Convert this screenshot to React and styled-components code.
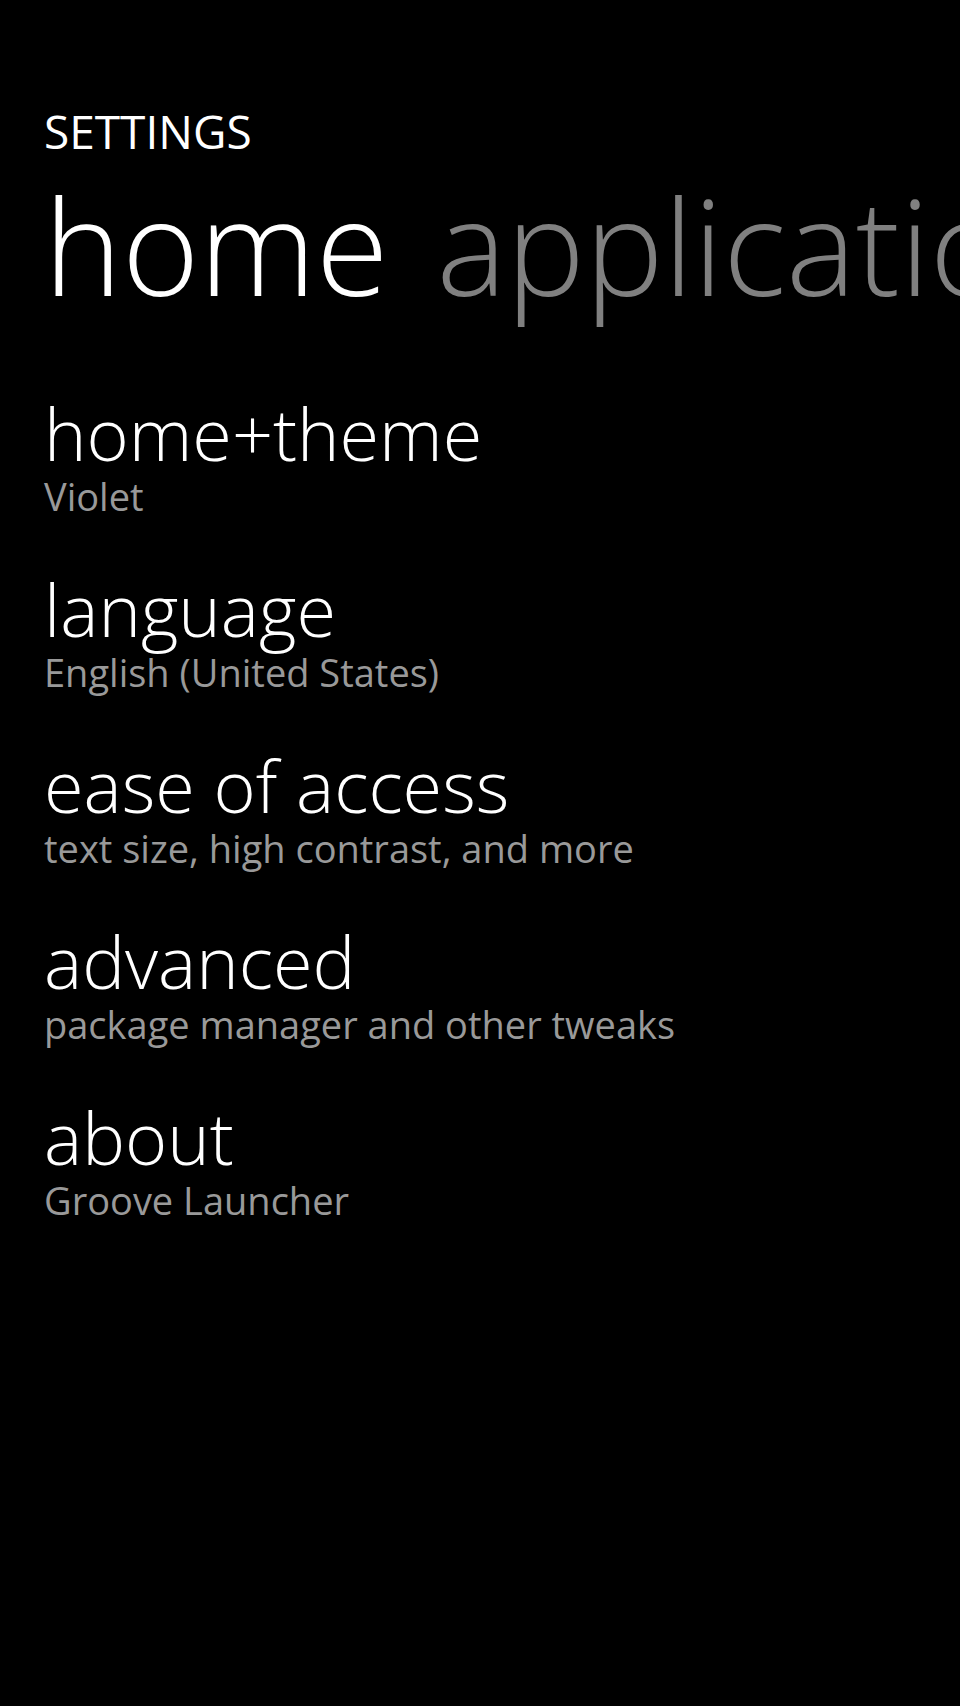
import React from "react";
import styled, { createGlobalStyle } from "styled-components";

const GlobalStyle = createGlobalStyle`
  html, body {
    margin: 0;
    padding: 0;
    background: #000;
  }
  body {
    font-family: "Open Sans", "Noto Sans", sans-serif;
    -webkit-font-smoothing: antialiased;
  }
`;

const Page = styled.div`
  width: 960px;
  min-height: 1706px;
  background: #000;
  overflow: hidden;
  box-sizing: border-box;
  padding: 108px 0 0 44px;
  display: flex;
  flex-direction: column;
`;

const AppTitle = styled.div`
  font-size: 46px;
  line-height: 46px;
  font-weight: 400;
  color: #fff;
`;

const PivotHeaders = styled.div`
  display: flex;
  gap: 48px;
  margin-top: 25px;
  white-space: nowrap;
`;

const PivotHeader = styled.div`
  font-size: 132px;
  line-height: 132px;
  font-weight: 300;
  color: ${(p) => (p.$active ? "#ffffff" : "#808080")};
  flex-shrink: 0;
`;

const List = styled.div`
  display: flex;
  flex-direction: column;
  gap: 58px;
  margin-top: 86px;
`;

const Item = styled.div`
  display: flex;
  flex-direction: column;
`;

const ItemTitle = styled.div`
  font-size: 72px;
  line-height: 72px;
  font-weight: 300;
  color: #fff;
`;

const ItemSub = styled.div`
  font-size: 38px;
  line-height: 38px;
  font-weight: 400;
  color: #999999;
  margin-top: 8px;
`;

const items = [
  { title: "home+theme", sub: "Violet" },
  { title: "language", sub: "English (United States)" },
  { title: "ease of access", sub: "text size, high contrast, and more" },
  { title: "advanced", sub: "package manager and other tweaks" },
  { title: "about", sub: "Groove Launcher" },
];

export default function App() {
  return (
    <>
      <GlobalStyle />
      <Page>
        <AppTitle>SETTINGS</AppTitle>
        <PivotHeaders>
          <PivotHeader $active>home</PivotHeader>
          <PivotHeader>applications</PivotHeader>
        </PivotHeaders>
        <List>
          {items.map((it) => (
            <Item key={it.title}>
              <ItemTitle>{it.title}</ItemTitle>
              <ItemSub>{it.sub}</ItemSub>
            </Item>
          ))}
        </List>
      </Page>
    </>
  );
}
